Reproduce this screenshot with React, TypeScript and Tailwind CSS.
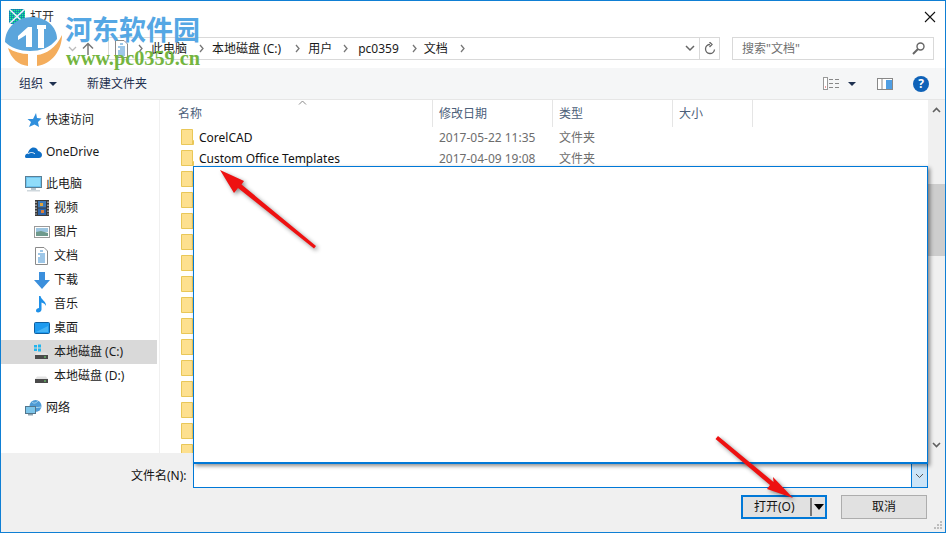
import type { ReactNode } from "react";

const FolderIcon = () => (
  <svg width="13" height="16" viewBox="0 0 13 16" className="shrink-0 mb-[2px]">
    <path d="M0.5 0.5H11.5V11.5L12.5 11.5V15.5H0.5Z" fill="#fde08f" stroke="#e9c758" />
    <path d="M11.5 11.5V15" stroke="#e9c758" />
  </svg>
);

const Sep = ({ ml }: { ml: string }) => (
  <svg width="5" height="9" viewBox="0 0 5 9" className={`shrink-0 ${ml}`}>
    <path d="M1 1L4 4.5L1 8" fill="none" stroke="#777" strokeWidth="1.3" />
  </svg>
);

const DocIcon = () => (
  <svg width="13" height="18" viewBox="0 0 13 18">
    <path d="M.5.5H9L12.5 4V17.5H.5Z" fill="#fff" stroke="#8a8a8a" />
    <path d="M5 4H8M3 7H10M5 9H10M3 11H10M3 13H10M3 15H10" stroke="#3d8fd1" strokeWidth="1" />
  </svg>
);

const StarIcon = () => (
  <svg width="16" height="16" viewBox="0 0 16 16">
    <path d="M10 1L11 6L15.5 6.5L12 10L13 15L8.5 12.5L3 15L5 10L1.5 7H7Z" fill="#2f8fdd" />
  </svg>
);

const CloudIcon = () => (
  <svg width="17" height="11" viewBox="0 0 17 11">
    <path d="M0 9.5C0 7.5 1.5 6.5 3 6.5C3.5 3 6 0.5 8.5 0.5C11 0.5 12.5 2 13 4C15.5 4.5 17 6 17 8C17 10 15.5 11 14 11H2C.8 11 0 10.5 0 9.5Z" fill="#0f6fc6" />
    <path d="M3 7C5 5 8 5 10 7" stroke="#fff" strokeWidth="1" fill="none" />
  </svg>
);

const PcIcon = () => (
  <svg width="17" height="16" viewBox="0 0 17 16">
    <rect x=".5" y=".5" width="16" height="11" fill="#6cc4f0" stroke="#5a7f95" />
    <rect x="2" y="2" width="13" height="8" fill="#8fdcfa" />
    <rect x="6" y="12" width="5" height="2" fill="#b8c6cf" />
    <rect x="2" y="14" width="13" height="1.5" fill="#cfd8dd" />
  </svg>
);

const FilmIcon = () => (
  <svg width="14" height="16" viewBox="0 0 14 16">
    <rect width="14" height="16" fill="#3a3a3a" />
    <path d="M1 1.5V14.5M13 1.5V14.5" stroke="#ddd" strokeWidth="1.2" strokeDasharray="1.5 1.5" />
    <rect x="3" y="1" width="8" height="6.5" fill="#3d79b8" />
    <rect x="3" y="8.5" width="8" height="6.5" fill="#2f65a8" />
    <rect x="5" y="3" width="3" height="3" fill="#e2a53b" />
    <rect x="6" y="10" width="3" height="3" fill="#d9803a" />
  </svg>
);

const PictureIcon = () => (
  <svg width="16" height="12" viewBox="0 0 16 12">
    <rect x=".5" y=".5" width="15" height="11" fill="#fff" stroke="#9a9a9a" />
    <rect x="2" y="2" width="12" height="4" fill="#9cc5e0" />
    <path d="M2 6L7 5L14 7V10H2Z" fill="#6f9a8d" />
  </svg>
);

const DownloadIcon = () => (
  <svg width="16" height="17" viewBox="0 0 16 17">
    <path d="M5 0H11V8H16L8 17L0 8H5Z" fill="#3b8fdc" />
  </svg>
);

const MusicIcon = () => (
  <svg width="11" height="17" viewBox="0 0 11 17">
    <path d="M3 0H4.5C5 4 10.5 5 10 10C9 7.5 7 7 5.5 6.5V13.5C5.5 15.5 3.5 16.5 2 16.5C.8 16.5 0 15.8 0 14.8C0 13 1.8 12 3 12Z" fill="#1e90e8" />
  </svg>
);

const DesktopIcon = () => (
  <svg width="16" height="12" viewBox="0 0 16 12">
    <rect x=".5" y=".5" width="15" height="11" rx="1" fill="#1e9bf0" stroke="#0f5f9f" />
    <path d="M2 10L14 4V10Z" fill="#46b4f5" />
  </svg>
);

const DriveIcon = ({ win }: { win?: boolean }) => (
  <svg width="15" height="16" viewBox="0 0 15 16">
    {win && <path d="M0 1H3V3.5H0ZM4 0.5H7V3.5H4ZM0 4.5H3V7H0ZM4 4.5H7V7.5H4Z" fill="#22b5ee" />}
    <path d="M1 11L3 8.5H12L14 11Z" fill="#e3e3e3" />
    <rect x="1" y="11" width="13" height="4" fill="#4a4a4a" />
    <rect x="10" y="12.5" width="2" height="1" fill="#6fe06f" />
  </svg>
);

const NetworkIcon = () => (
  <svg width="17" height="16" viewBox="0 0 17 16">
    <circle cx="10.5" cy="6" r="6" fill="#4f9bd5" />
    <path d="M7 2C9 4 11 3 13 1M6 8C9 7 12 8 16 7" stroke="#a7d6f0" fill="none" />
    <rect x=".5" y="6.5" width="10" height="7" fill="#7cc5ea" stroke="#53768c" />
    <rect x="3" y="14" width="5" height="1.5" fill="#8ea3b0" />
  </svg>
);

const navItems: { label: string; icon: ReactNode; sub?: boolean; active?: boolean; gap?: boolean }[] = [
  { label: "快速访问", icon: <StarIcon /> },
  { label: "OneDrive", icon: <CloudIcon />, gap: true },
  { label: "此电脑", icon: <PcIcon />, gap: true },
  { label: "视频", icon: <FilmIcon />, sub: true },
  { label: "图片", icon: <PictureIcon />, sub: true },
  { label: "文档", icon: <DocIcon />, sub: true },
  { label: "下载", icon: <DownloadIcon />, sub: true },
  { label: "音乐", icon: <MusicIcon />, sub: true },
  { label: "桌面", icon: <DesktopIcon />, sub: true },
  { label: "本地磁盘 (C:)", icon: <DriveIcon win />, sub: true, active: true },
  { label: "本地磁盘 (D:)", icon: <DriveIcon />, sub: true },
  { label: "网络", icon: <NetworkIcon />, gap: true },
];

const emptyRows = Array.from({ length: 14 }, (_, i) => i);

export default function App() {
  return (
    <div className="relative w-[946px] h-[533px] overflow-hidden border border-[#0f7fd4] bg-white flex flex-col text-[12px] text-[#1a1a1a] font-['Noto_Sans','Noto_Sans_CJK_SC',sans-serif]">
      {/* title bar */}
      <div className="h-[31px] flex items-center shrink-0">
        <svg width="16" height="15" viewBox="0 0 16 15" className="block ml-[8px]">
          <defs>
            <pattern id="dither" width="2" height="2" patternUnits="userSpaceOnUse">
              <rect width="2" height="2" fill="#0fb38f" />
              <rect width="1" height="1" fill="#1668c8" />
              <rect x="1" y="1" width="1" height="1" fill="#1fe0a0" />
            </pattern>
          </defs>
          <rect width="16" height="15" fill="url(#dither)" />
          <path d="M0 0L16 15M16 0L0 15" stroke="#eef" strokeWidth="1.6" />
        </svg>
        <span className="ml-[5px] text-[#333]">打开</span>
        <svg width="12" height="12" viewBox="0 0 12 12" className="ml-auto mr-[9px]">
          <path d="M1 1L11 11M11 1L1 11" stroke="#111" strokeWidth="1.1" />
        </svg>
      </div>

      {/* address row */}
      <div className="h-[23px] mt-[5px] flex items-stretch shrink-0">
        <div className="w-[107px] flex items-center shrink-0">
          <svg width="9" height="6" viewBox="0 0 9 6" className="ml-[67px]">
            <path d="M1 1L4.5 4.5L8 1" fill="none" stroke="#bbb" strokeWidth="1.3" />
          </svg>
          <svg width="12" height="13" viewBox="0 0 12 13" className="ml-[5px]">
            <path d="M6 13V1.5M1 6.5L6 1.5L11 6.5" fill="none" stroke="#777" strokeWidth="1.5" />
          </svg>
        </div>
        <div className="w-[612px] border border-[#d9d9d9] flex items-center">
          <div className="ml-[6px]"><DocIcon /></div>
          <Sep ml="ml-[10px]" />
          <span className="ml-[8px]">此电脑</span>
          <Sep ml="ml-[12px]" />
          <span className="ml-[8px]">本地磁盘 (C:)</span>
          <Sep ml="ml-[14px]" />
          <span className="ml-[8px]">用户</span>
          <Sep ml="ml-[11px]" />
          <span className="ml-[10px]">pc0359</span>
          <Sep ml="ml-[13px]" />
          <span className="ml-[7px]">文档</span>
          <Sep ml="ml-[12px]" />
          <svg width="10" height="7" viewBox="0 0 10 7" className="ml-auto mr-[4px]">
            <path d="M1 1L5 5L9 1" fill="none" stroke="#666" strokeWidth="1.5" />
          </svg>
          <div className="w-[20px] h-full border-l border-[#d9d9d9] flex items-center justify-center">
            <svg width="12" height="13" viewBox="0 0 12 13">
              <path d="M6 2.5A4.5 4.5 0 1 0 10.5 7.5M5.5 0L8 2.5L5.5 5" fill="none" stroke="#666" strokeWidth="1.3" />
            </svg>
          </div>
        </div>
        <div className="w-[202px] ml-[12px] border border-[#d9d9d9] flex items-center">
          <span className="ml-[9px] text-[#707070]">搜索"文档"</span>
          <svg width="13" height="13" viewBox="0 0 13 13" className="ml-auto mr-[8px]">
            <circle cx="8.5" cy="4.5" r="3.5" fill="none" stroke="#666" strokeWidth="1.4" />
            <path d="M6 7L1 12" stroke="#666" strokeWidth="2" />
          </svg>
        </div>
      </div>

      {/* toolbar */}
      <div className="h-[32px] mt-[8px] bg-[#f5f6f7] border-b border-[#e6e6e6] flex items-center shrink-0 text-[#1e3050]">
        <span className="ml-[18px]">组织</span>
        <span className="ml-[6px] w-0 h-0 border-x-[4px] border-x-transparent border-t-[4px] border-t-[#1e3050]" />
        <span className="ml-[30px]">新建文件夹</span>
        <svg width="17" height="13" viewBox="0 0 17 13" className="ml-[676px]">
          <rect x=".5" y=".5" width="4" height="12" fill="#fff" stroke="#999" />
          <path d="M6 2.5H10M12 2.5H16M6 6.5H10M12 6.5H16M6 10.5H10M12 10.5H16" stroke="#888" />
          <rect x="2" y="9.5" width="1" height="1" fill="#d33" />
        </svg>
        <span className="ml-[8px] w-0 h-0 border-x-[4px] border-x-transparent border-t-[4px] border-t-[#1e3050]" />
        <svg width="16" height="12" viewBox="0 0 16 12" className="ml-[21px]">
          <rect x=".5" y=".5" width="15" height="11" fill="#fff" stroke="#888" />
          <rect x="9" y="2" width="6" height="9" fill="#4f9ee3" />
          <path d="M5 1V11" stroke="#888" />
        </svg>
        <span className="ml-[20px] w-[16px] h-[16px] rounded-full bg-[#0f62b8] text-white text-[12px] font-bold leading-[16px] text-center">?</span>
      </div>

      {/* main area */}
      <div className="flex-1 min-h-0 flex">
        <div className="w-[159px] shrink-0 border-r border-[#f0f0f0] pt-[8px]">
          {navItems.map((item) => (
            <div
              key={item.label}
              className={`h-[24px] flex items-center w-[156px] ${item.gap ? "mt-[8px]" : ""} ${item.active ? "bg-[#d9d9d9]" : ""}`}
            >
              <div className={`flex justify-center shrink-0 w-[17px] ${item.sub ? "ml-[32px]" : "ml-[24px]"}`}>
                {item.icon}
              </div>
              <span className="ml-[4px]">{item.label}</span>
            </div>
          ))}
        </div>

        <div className="flex-1 min-w-0 overflow-hidden">
          <div className="h-[27px] flex text-[#4c607a] relative">
            <svg width="9" height="5" viewBox="0 0 9 5" className="absolute left-[138px] top-[0px]">
              <path d="M1 4.5L4.5 1L8 4.5" fill="none" stroke="#888" />
            </svg>
            <div className="w-[273px] border-r border-[#e5e5e5] pl-[18px] flex items-center">名称</div>
            <div className="w-[120px] border-r border-[#e5e5e5] pl-[6px] flex items-center">修改日期</div>
            <div className="w-[120px] border-r border-[#e5e5e5] pl-[6px] flex items-center">类型</div>
            <div className="w-[80px] border-r border-[#e5e5e5] pl-[6px] flex items-center">大小</div>
          </div>
          <div className="h-[21px] flex items-center pl-[21px]">
            <FolderIcon />
            <span className="ml-[5px] w-[240px] text-[#111]">CorelCAD</span>
            <span className="w-[120px] text-[#6d6d6d]">2017-05-22 11:35</span>
            <span className="text-[#6d6d6d]">文件夹</span>
          </div>
          <div className="h-[21px] flex items-center pl-[21px]">
            <FolderIcon />
            <span className="ml-[5px] w-[240px] text-[#111]">Custom Office Templates</span>
            <span className="w-[120px] text-[#6d6d6d]">2017-04-09 19:08</span>
            <span className="text-[#6d6d6d]">文件夹</span>
          </div>
          {emptyRows.map((i) => (
            <div key={i} className="h-[21px] flex items-center pl-[21px]">
              <FolderIcon />
            </div>
          ))}
        </div>

        <div className="w-[17px] shrink-0 bg-[#f0f0f0] flex flex-col items-center">
          <svg width="9" height="6" viewBox="0 0 9 6" className="mt-[7px]">
            <path d="M1 5L4.5 1.5L8 5" fill="none" stroke="#606060" strokeWidth="1.6" />
          </svg>
          <div className="w-full h-[72px] mt-[71px] bg-[#cdcdcd]" />
          <svg width="9" height="6" viewBox="0 0 9 6" className="mt-auto mb-[5px]">
            <path d="M1 1L4.5 4.5L8 1" fill="none" stroke="#606060" strokeWidth="1.6" />
          </svg>
        </div>
      </div>

      {/* bottom bar */}
      <div className="h-[79px] shrink-0 bg-[#f0f0f0] relative">
        <div className="flex items-center h-[25px] mt-[10px]">
          <span className="ml-[130px] w-[62px] text-[#111]">文件名(N):</span>
          <div className="w-[735px] h-full bg-white border border-[#0078d7] flex justify-end">
            <div className="w-[16px] h-full bg-[#cce4f7] border-l border-[#0078d7] flex items-center justify-center">
              <svg width="9" height="6" viewBox="0 0 9 6">
                <path d="M1 1L4.5 4.5L8 1" fill="none" stroke="#555" />
              </svg>
            </div>
          </div>
        </div>
        <div className="flex justify-end mt-[7px] pr-[18px]">
          <div className="w-[86px] h-[24px] border-2 border-[#0078d7] bg-[#e1e1e1] flex items-center">
            <span className="ml-[11px] text-[#111]">打开(O)</span>
            <span className="ml-[15px] w-[2px] h-[18px] bg-[#777]" />
            <span className="ml-[2px] w-0 h-0 border-x-[5px] border-x-transparent border-t-[6px] border-t-black" />
          </div>
          <div className="w-[86px] h-[24px] ml-[14px] border border-[#adadad] bg-[#e1e1e1] flex items-center justify-center text-[#111]">取消</div>
        </div>
        <svg width="10" height="10" viewBox="0 0 10 10" className="absolute right-[2px] bottom-[2px]">
          <path d="M7 1H9V3H7ZM4 4H6V6H4ZM7 4H9V6H7ZM1 7H3V9H1ZM4 7H6V9H4ZM7 7H9V9H7Z" fill="#bdbdbd" />
        </svg>
      </div>

      {/* popup laid over the list */}
      <div className="absolute left-[192px] top-[165px] w-[735px] h-[298px] bg-white border border-[#0078d7] border-b-2 shadow-[2px_2px_4px_rgba(0,0,0,0.45)]" />

      {/* watermark */}
      <svg width="70" height="72" viewBox="0 0 70 72" className="absolute -left-px -top-px">
        <path d="M5 42C5 28 17 17 32 17C46 17 57 27 57 39C50 48 40 51 30 51C20 51 11 48 5 42Z" fill="#5aa5dc" />
        <path d="M18 36L28 27H32V47H26V35L18 40ZM37 25H46V29H44V48H38V29H37Z" fill="#fff" />
        <path d="M8 48C14 52 22 54 28 54V66C18 65 11 58 8 48ZM37 55C46 54 56 48 62 35C62 50 52 64 37 66Z" fill="#f4ad5c" />
      </svg>
      <div className="absolute left-[64px] top-[9px] text-[27px] leading-[38px] font-bold text-[#55a7e4] whitespace-nowrap font-['Noto_Sans_CJK_SC',sans-serif]">
        河东软件园
      </div>
      <div className="absolute left-[65px] top-[47px] text-[20.3px] leading-[20px] font-bold text-[#74b53f] whitespace-nowrap font-['Liberation_Serif',serif]">
        www.pc0359.cn
      </div>

      {/* red arrows */}
      <svg width="946" height="533" viewBox="0 0 946 533" className="absolute -left-px -top-px pointer-events-none drop-shadow-[2px_2px_2px_rgba(0,0,0,0.45)]">
        <path d="M220 170L244 181L241.5 184.5L316 246L314 248.5L238 188L234 193Z" fill="#ee1111" />
        <path d="M793 498L773 477L773.5 482L718 436L715.5 439L770 485L767 489Z" fill="#ee1111" />
      </svg>
    </div>
  );
}
